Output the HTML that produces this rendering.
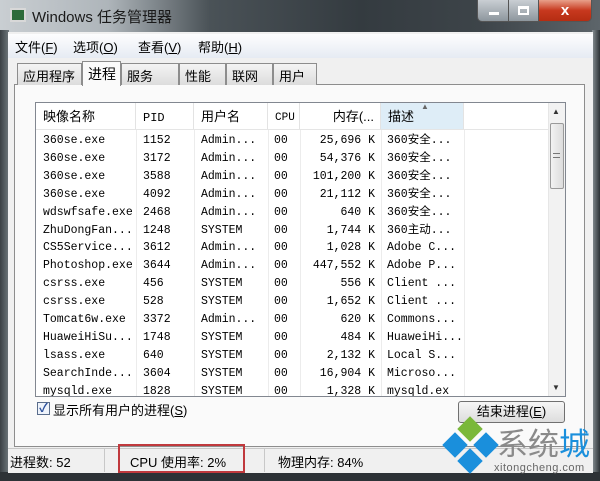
<!DOCTYPE html>
<html><head><meta charset="utf-8"><style>
*{margin:0;padding:0;box-sizing:border-box}
body{width:600px;height:481px;overflow:hidden;background:#2a2e31;font-family:"Liberation Sans","Noto Sans CJK SC",sans-serif;font-size:12px;color:#000;position:relative}
.abs{position:absolute}
#title{left:0;top:0;width:600px;height:34px;background:linear-gradient(90deg,#c9ced2 0%,#aeb5ba 18%,#4a5257 35%,#343b40 60%,#3d4449 80%,#5d656a 100%)}
#frameL{left:0;top:30px;width:9px;height:451px;background:linear-gradient(90deg,#3a4044,#6f777c)}
#frameR{left:592px;top:30px;width:8px;height:451px;background:linear-gradient(90deg,#8a9296,#2c3236)}
#client{left:8px;top:32px;width:585px;height:441px;background:#f0f0f0}
#menu{left:8px;top:34px;width:585px;height:24px;background:linear-gradient(#fdfdfe,#e6ebf3)}
.tab{top:63px;height:22px;border:1px solid #8d8d8d;border-bottom:none;background:linear-gradient(#f4f4f4,#dcdcdc);font-size:13px;padding:2px 0 0 5px}
#panel{left:14px;top:84px;width:571px;height:363px;border:1px solid #8d8d8d;background:#fafafa}
#list{left:35px;top:102px;width:531px;height:295px;border:1px solid #828790;background:#fff;overflow:hidden}
.hd{position:absolute;top:0;height:27px;border-right:1px solid #e3e3e3;font-size:13px;line-height:16px;padding-top:6px;padding-left:7px;background:#fff}
.row{position:absolute;left:0;height:18px;font-family:"Liberation Mono","Noto Sans CJK SC",monospace;font-size:11.5px;line-height:14px;white-space:nowrap}
.c{position:absolute;top:2px;line-height:14px;height:14px}
.vl{position:absolute;top:27px;width:1px;height:270px;background:#ececec}
#status{left:8px;top:448px;width:585px;height:25px;background:#f0f0f0;border-top:1px solid #c8c8c8;font-size:13px}
</style></head><body>
<div class="abs" id="title"></div>
<div class="abs" style="left:10px;top:8px;width:16px;height:14px;background:#2d6b3a;border:2px solid #d8d8d8"></div>
<div class="abs" style="left:32px;top:6px;font-size:15px;color:#1a1a1a">Windows 任务管理器</div>
<div class="abs" style="left:477px;top:0;width:115px;height:22px;border:1px solid #555;border-top:none;border-radius:0 0 5px 5px;overflow:hidden;display:flex">
 <div style="width:31px;background:linear-gradient(#c9ced3,#8d969d);border-right:1px solid #555;position:relative"><div style="position:absolute;left:11px;top:12px;width:10px;height:3px;background:#fff"></div></div>
 <div style="width:30px;background:linear-gradient(#c9ced3,#8d969d);border-right:1px solid #555;position:relative"><div style="position:absolute;left:9px;top:6px;width:11px;height:9px;border:2px solid #fff;border-top-width:3px"></div></div>
 <div style="flex:1;background:linear-gradient(#e8a08a,#c7381e 50%,#b52d12);color:#fff;font-weight:bold;font-size:15px;text-align:center;line-height:22px">x</div>
</div>
<div class="abs" id="frameL"></div><div class="abs" id="frameR"></div>
<div class="abs" style="left:0;top:472px;width:600px;height:9px;background:#2d3236"></div>
<div class="abs" id="client"></div>
<div class="abs" id="menu"></div>
<div class="abs" style="left:15px;top:37px;font-size:13px;word-spacing:0">文件(<u>F</u>)</div>
<div class="abs" style="left:73px;top:37px;font-size:13px">选项(<u>O</u>)</div>
<div class="abs" style="left:138px;top:37px;font-size:13px">查看(<u>V</u>)</div>
<div class="abs" style="left:198px;top:37px;font-size:13px">帮助(<u>H</u>)</div>
<div class="abs" id="panel"></div>
<div class="abs tab" style="left:17px;width:65px">应用程序</div>
<div class="abs tab" style="left:121px;width:58px">服务</div>
<div class="abs tab" style="left:179px;width:47px">性能</div>
<div class="abs tab" style="left:226px;width:47px">联网</div>
<div class="abs tab" style="left:273px;width:44px">用户</div>
<div class="abs tab" style="left:82px;top:61px;width:39px;height:25px;background:#fafafa;border-bottom:none;font-size:14px">进程</div>
<div class="abs" id="list">
 <div class="hd" style="left:0;width:100px">映像名称</div>
 <div class="hd" style="left:100px;width:58px;font-family:'Liberation Mono',monospace;font-size:12px;padding-top:7px">PID</div>
 <div class="hd" style="left:158px;width:74px">用户名</div>
 <div class="hd" style="left:232px;width:32px;font-family:'Liberation Mono',monospace;font-size:11px;padding-top:7px">CPU</div>
 <div class="hd" style="left:264px;width:81px;text-align:right;padding-right:6px">内存(...</div>
 <div class="hd" style="left:345px;width:83px;background:#deedf7">描述<span style="position:absolute;left:40px;top:-4px;font-size:8px;color:#666">▲</span></div>
 <div style="position:absolute;left:0;top:26px;width:512px;height:1px;background:#e5e5e5"></div>
 <div class="vl" style="left:100px"></div><div class="vl" style="left:158px"></div><div class="vl" style="left:232px"></div><div class="vl" style="left:264px"></div><div class="vl" style="left:345px"></div><div class="vl" style="left:428px"></div>
 <div style="position:absolute;left:512px;top:0;width:17px;height:293px;background:#f2f2f2;border-left:1px solid #e6e6e6">
  <div style="position:absolute;left:3px;top:4px;font-size:8px;color:#333">▲</div>
  <div style="position:absolute;left:1px;top:20px;width:14px;height:66px;border:1px solid #9a9a9a;border-radius:2px;background:linear-gradient(90deg,#f3f3f3,#dcdcdc)"></div>
  <div style="position:absolute;left:4px;top:50px;width:7px;height:5px;border-top:1px solid #777;border-bottom:1px solid #777"></div>
  <div style="position:absolute;left:3px;top:280px;font-size:8px;color:#333">▼</div>
 </div>
 <div id="rows"></div>
</div>
<script>
var d=[["360se.exe","1152","Admin...","25,696 K","360安全..."],["360se.exe","3172","Admin...","54,376 K","360安全..."],["360se.exe","3588","Admin...","101,200 K","360安全..."],["360se.exe","4092","Admin...","21,112 K","360安全..."],["wdswfsafe.exe","2468","Admin...","640 K","360安全..."],["ZhuDongFan...","1248","SYSTEM","1,744 K","360主动..."],["CS5Service...","3612","Admin...","1,028 K","Adobe C..."],["Photoshop.exe","3644","Admin...","447,552 K","Adobe P..."],["csrss.exe","456","SYSTEM","556 K","Client ..."],["csrss.exe","528","SYSTEM","1,652 K","Client ..."],["Tomcat6w.exe","3372","Admin...","620 K","Commons..."],["HuaweiHiSu...","1748","SYSTEM","484 K","HuaweiHi..."],["lsass.exe","640","SYSTEM","2,132 K","Local S..."],["SearchInde...","3604","SYSTEM","16,904 K","Microso..."],["mysqld.exe","1828","SYSTEM","1,328 K","mysqld.ex"]];
var h="";d.forEach(function(r,i){var t=29+i*17.9;h+='<div class="row" style="top:'+t+'px"><span class="c" style="left:7px">'+r[0]+'</span><span class="c" style="left:107px">'+r[1]+'</span><span class="c" style="left:165px">'+r[2]+'</span><span class="c" style="left:238px">00</span><span class="c" style="left:264px;width:75px;text-align:right">'+r[3]+'</span><span class="c" style="left:351px">'+r[4]+'</span></div>';});
document.getElementById("rows").innerHTML=h;
</script>
<div class="abs" style="left:37px;top:402px;width:13px;height:13px;border:1px solid #5a6d8c;background:#eef3fb;color:#2a4f9c;font-size:12px;line-height:11px;text-align:center;font-weight:bold">✓</div>
<div class="abs" style="left:53px;top:400px;font-size:13px">显示所有用户的进程(<u>S</u>)</div>
<div class="abs" style="left:458px;top:401px;width:107px;height:22px;border:1px solid #707070;border-radius:3px;background:linear-gradient(#f6f6f6,#dddddd);text-align:center;font-size:13px;line-height:20px">结束进程(<u>E</u>)</div>
<div class="abs" id="status"></div>
<div class="abs" style="left:10px;top:452px;font-size:13px">进程数: 52</div>
<div class="abs" style="left:104px;top:449px;width:1px;height:23px;background:#c8c8c8"></div>
<div class="abs" style="left:264px;top:449px;width:1px;height:23px;background:#c8c8c8"></div>
<div class="abs" style="left:118px;top:444px;width:127px;height:29px;border:2px solid #c0393d"></div>
<div class="abs" style="left:130px;top:452px;font-size:13px">CPU 使用率: 2%</div>
<div class="abs" style="left:278px;top:452px;font-size:13px">物理内存: 84%</div>
<div class="abs" style="left:461px;top:420px;width:18px;height:18px;background:#7ab83a;transform:rotate(45deg)"></div>
<div class="abs" style="left:446px;top:436px;width:18px;height:18px;background:#1a8fdc;transform:rotate(45deg)"></div>
<div class="abs" style="left:477px;top:436px;width:18px;height:18px;background:#1a8fdc;transform:rotate(45deg)"></div>
<div class="abs" style="left:461px;top:452px;width:18px;height:18px;background:#1a8fdc;transform:rotate(45deg)"></div>
<div class="abs" style="left:497px;top:425px;font-size:31px;line-height:34px;color:#8a8a8a;font-family:'Noto Sans CJK SC',sans-serif">系统<span style="color:#1a8fdc">城</span></div>
<div class="abs" style="left:494px;top:462px;font-size:11px;color:#666;letter-spacing:0.5px">xitongcheng.com</div>
</body></html>
